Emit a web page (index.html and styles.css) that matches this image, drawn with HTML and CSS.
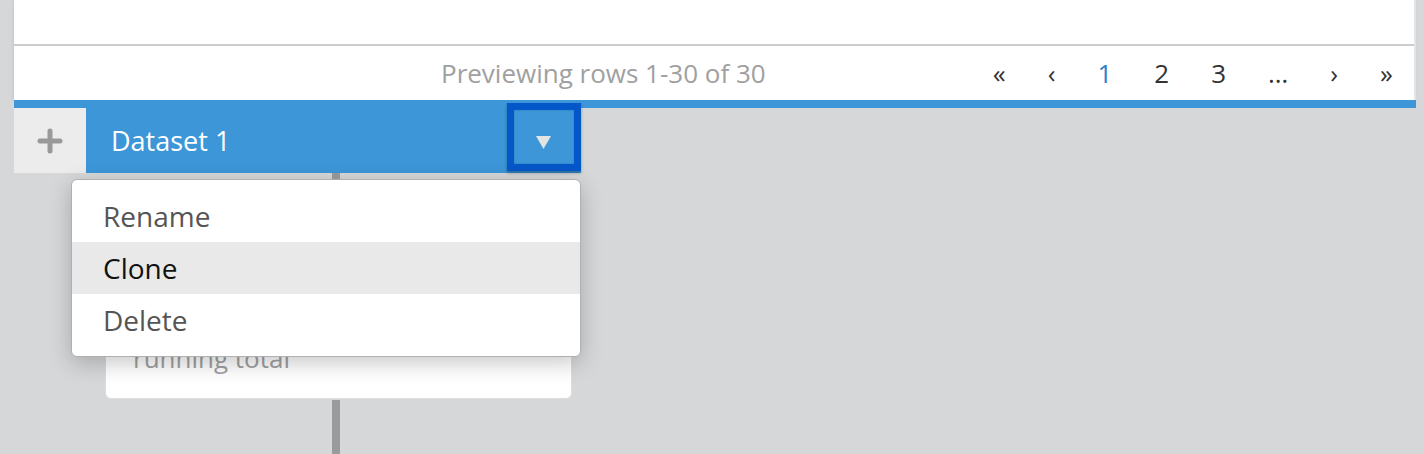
FILE: index.html
```html
<!DOCTYPE html>
<html lang="en">
<head>
<meta charset="utf-8">
<title>Dataset preview</title>
<link rel="stylesheet" href="styles.css">
</head>
<body>
<div class="page">
  <section class="panel">
    <div class="table-area"></div>
    <div class="table-footer">
      <span class="status">Previewing rows 1-30 of 30</span>
      <nav class="pager">
        <span class="pg">«</span>
        <span class="pg">‹</span>
        <span class="pg active">1</span>
        <span class="pg">2</span>
        <span class="pg">3</span>
        <span class="pg">…</span>
        <span class="pg">›</span>
        <span class="pg">»</span>
      </nav>
    </div>
  </section>
  <div class="tabstrip">
    <div class="add-tab">
      <svg width="26" height="26" viewBox="0 0 26 26" aria-hidden="true"><path d="M13 3v20M3 13h20" stroke="#999" stroke-width="5" stroke-linecap="round" fill="none"/></svg>
    </div>
    <div class="dataset-tab">
      <span class="tab-label">Dataset 1</span>
      <button class="tab-toggle" type="button" aria-label="Open menu">
        <svg width="15" height="13" viewBox="0 0 15 13" aria-hidden="true"><polygon points="0,0 15,0 7.5,13" fill="#e4e4e4"/></svg>
      </button>
      <ul class="tab-menu">
        <li class="menu-item">Rename</li>
        <li class="menu-item hover">Clone</li>
        <li class="menu-item">Delete</li>
      </ul>
    </div>
  </div>
  <div class="canvas">
    <div class="flow">
      <div class="connector top"></div>
      <div class="step-card"><span class="step-name">running total</span></div>
      <div class="connector bottom"></div>
    </div>
  </div>
</div>
</body>
</html>
```

FILE: styles.css
```css
* { box-sizing: border-box; }
html, body { margin: 0; padding: 0; }
body {
  background: #d6d7d9;
  font-family: "Open Sans", "Noto Sans", sans-serif;
  height: 454px;
  overflow: hidden;
}
.page { display: flex; flex-direction: column; }
.panel {
  margin-left: 14px;
  width: 1402px;
  background: #fff;
  border-right: 2px solid #e4e4e4;
  box-shadow: -1px 0 3px rgba(0,0,0,0.08);
}
.table-area {
  height: 46px;
  border-bottom: 2px solid #cccccc;
}
.table-footer {
  height: 54px;
  display: flex;
  align-items: center;
}
.status {
  margin-left: 427px;
  font-size: 26px;
  color: #a0a0a0;
  flex: 1;
}
.pager { display: flex; align-items: center; margin-right: 0; }
.pg {
  padding: 0 21px;
  font-size: 26px;
  color: #333;
}
.pg.active { color: #2d80c9; }

.tabstrip {
  margin-left: 14px;
  width: 1402px;
  display: flex;
  align-items: flex-start;
  background: linear-gradient(#3c96d8 0 8px, transparent 8px);
}
.add-tab {
  margin-top: 8px;
  width: 72px;
  height: 65px;
  background: #ececec;
  display: flex;
  align-items: center;
  justify-content: center;
}
.dataset-tab {
  position: relative;
  width: 495px;
  height: 73px;
  background: #3c96d8;
  display: flex;
  align-items: flex-start;
}
.tab-label {
  flex: 1;
  padding: 26px 0 0 25px;
  font-size: 27px;
  line-height: 30px;
  color: #fff;
}
.tab-toggle {
  margin-top: 3px;
  width: 74px;
  height: 68px;
  padding: 10px 2px 0 0;
  border: 7px solid #0457c8;
  background: #3c96d8;
  box-shadow: 0 2px 3px rgba(0,0,0,0.3), inset 0 0 2px rgba(0,0,0,0.2);
  display: flex;
  align-items: center;
  justify-content: center;
}
.tab-menu {
  position: absolute;
  top: calc(100% + 6px);
  left: -15px;
  right: 0;
  margin: 0;
  padding: 10px 0;
  list-style: none;
  background: #fff;
  border: 1px solid #b0b0b0;
  border-radius: 6px;
  box-shadow: 0 6px 22px rgba(0,0,0,0.22);
  z-index: 5;
}
.menu-item {
  height: 52px;
  padding-left: 31px;
  display: flex;
  align-items: center;
  font-size: 28px;
  color: #555;
}
.menu-item.hover { background: #e9e9e9; color: #111; }

.canvas { flex: 1; }
.flow {
  margin-left: 105px;
  width: 467px;
  display: flex;
  flex-direction: column;
}
.connector {
  margin-left: 227px;
  width: 8px;
  background: #9b9b9b;
}
.connector.top { height: 130px; }
.connector.bottom { height: 60px; margin-top: 1px; }
.step-card {
  height: 96px;
  background: #fff;
  border: 1px solid #dcdcdc;
  border-radius: 6px;
  padding: 36px 0 0 27px;
}
.step-name {
  font-size: 26px;
  color: #a0a0a0;
}
```
